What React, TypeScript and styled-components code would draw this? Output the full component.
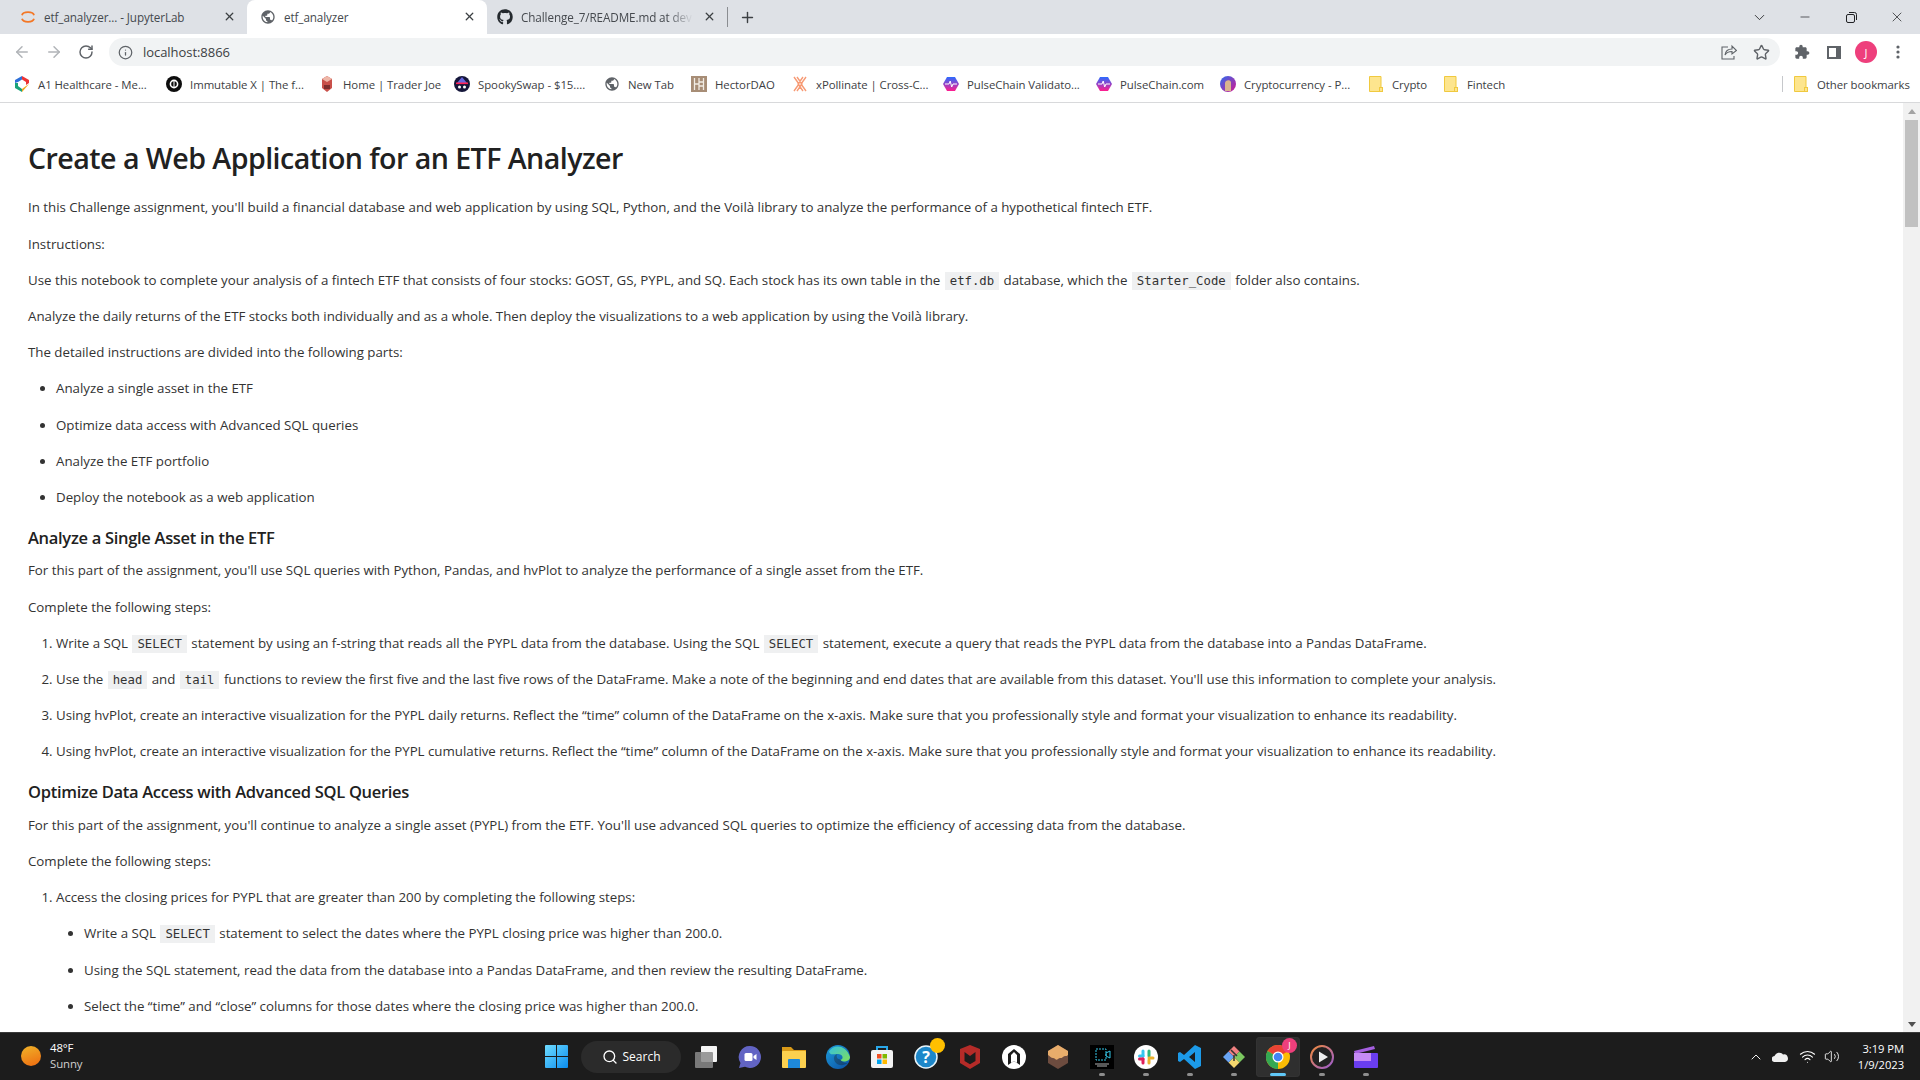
import React from "react";
import styled, { createGlobalStyle } from "styled-components";
import { ArrowLeft, ArrowRight, RotateCw, Info, Star, ChevronDown, ChevronUp, Minus, X, Plus, Search as SearchIcon, Wifi, Volume2 } from "lucide-react";
import { FaGithub } from "react-icons/fa";

const Global = createGlobalStyle`
  html, body { margin: 0; padding: 0; height: 100%; overflow: hidden; background: #fff; }
  * { box-sizing: border-box; }
`;
const UI = `"Open Sans", "Noto Sans", sans-serif`;

const Shell = styled.div`
  width: 1920px; height: 1080px; display: flex; flex-direction: column; overflow: hidden; font-family: ${UI};
`;
const TabStrip = styled.div`
  height: 34px; flex: none; background: #dee1e6; display: flex; align-items: stretch; padding-left: 7px; position: relative;
`;
const Tab = styled.div<{ $active?: boolean; $pad?: number }>`
  width: 240px; height: 34px; display: flex; align-items: center; padding: 0 10px 1px ${p => p.$pad ?? 13}px; gap: 8px;
  background: ${p => (p.$active ? "#fff" : "transparent")};
  border-radius: ${p => (p.$active ? "8px 8px 0 0" : "0")};
  color: #45494e; font-size: 11.7px; line-height: 16px;
`;
const TabIcon = styled.span`
  width: 16px; height: 16px; flex: none; display: flex; align-items: center; justify-content: center; color: #3c4043;
`;
const TabTitle = styled.span<{ $fade?: boolean }>`
  flex: 1; white-space: nowrap; overflow: hidden; letter-spacing: -0.1px;
  ${p => p.$fade ? "mask-image: linear-gradient(to right, #000 85%, transparent 100%);" : ""}
`;
const TabClose = styled.span`
  width: 16px; height: 16px; flex: none; display: flex; align-items: center; justify-content: center; color: #3c4043;
`;
const TabDivider = styled.div`
  width: 1px; height: 20px; background: #8a8d91; align-self: center;
`;
const NewTab = styled.div`
  width: 28px; margin-left: 5px; display: flex; align-items: center; justify-content: center; color: #3c4043;
`;
const WindowControls = styled.div`
  margin-left: auto; display: flex; align-items: center; color: #202124;
`;
const WindowButton = styled.div`
  width: 46px; height: 28px; display: flex; align-items: center; justify-content: center;
`;
const Toolbar = styled.div`
  height: 34px; flex: none; background: #fff; display: flex; align-items: center; padding: 2px 0 0 6px;
`;
const NavButton = styled.div<{ $muted?: boolean }>`
  width: 32px; height: 28px; display: flex; align-items: center; justify-content: center;
  color: ${p => (p.$muted ? "#b1b4b8" : "#5f6368")};
`;
const Omnibox = styled.div`
  margin-left: 7px; width: 1671px; height: 28px; border-radius: 14px 14px; background: #f1f3f4; display: flex; align-items: center;
  padding: 0 10px 0 9px; color: #5f6368;
`;
const Url = styled.span`
  margin-left: 10px; font-size: 13px; color: #3c4043; letter-spacing: -0.05px;
`;
const OmniActions = styled.div`
  margin-left: auto; display: flex; align-items: center; gap: 16px;
`;
const ToolActions = styled.div`
  margin-left: 6px; display: flex; align-items: center;
`;
const ToolAction = styled.div`
  width: 32px; height: 28px; display: flex; align-items: center; justify-content: center; color: #5f6368;
`;
const Avatar = styled.div`
  width: 22px; height: 22px; border-radius: 50%; background: #ee3f7c; color: #fff; font-size: 11px;
  display: flex; align-items: center; justify-content: center;
`;
const BookmarkBar = styled.div`
  height: 35px; flex: none; background: #fff; border-bottom: 1px solid #d8d9db; display: flex; align-items: center; padding: 0 0 2px 14px;
`;
const Bookmark = styled.div<{ $w: number }>`
  width: ${p => p.$w}px; flex: none; display: flex; align-items: center; gap: 8px; color: #3c4043; font-size: 11.4px; white-space: nowrap; letter-spacing: -0.05px;
`;
const BookmarkIcon = styled.span`
  width: 16px; height: 16px; flex: none; display: flex; align-items: center; justify-content: center;
`;
const BarDivider = styled.div`
  width: 1px; height: 16px; background: #c6c8cb; margin: 0 10px 0 0;
`;
const Middle = styled.div`
  flex: 1; min-height: 0; display: flex; background: #fff;
`;
const Page = styled.main`
  flex: 1; min-width: 0; overflow: hidden; padding: 22px 28px 0; color: #333; font-size: 13.32px; line-height: 21px; letter-spacing: -0.02px;
`;
const Title = styled.h1`
  margin: 16px 0 22.4px; font-size: 28.6px; line-height: 34px; font-weight: 600; color: #212121; letter-spacing: -0.55px;
`;
const SubTitle = styled.h3`
  margin: 17px 0 9.5px; font-size: 16.5px; line-height: 26px; font-weight: 600; color: #212121; letter-spacing: -0.3px;
`;
const Para = styled.p`
  margin: 0 0 15.2px; white-space: nowrap;
`;
const Code = styled.code`
  font-family: "DejaVu Sans Mono", monospace; font-size: 12.3px; line-height: 1; background: #eff0f1; color: #333; padding: 2px 5px; letter-spacing: 0; margin: 0 1px;
`;
const Bullets = styled.ul`
  margin: 0; padding: 0 0 0 28px; list-style: disc;
`;
const Numbers = styled.ol`
  margin: 0; padding: 0 0 0 28px;
`;
const Item = styled.li`
  & > ul { margin-top: 0; }
`;
const Scrollbar = styled.div`
  width: 17px; flex: none; background: #f1f1f1; display: flex; flex-direction: column; align-items: center; padding: 6px 0 5px;
`;
const ScrollArrow = styled.div<{ $up?: boolean }>`
  width: 0; height: 0; border-left: 4px solid transparent; border-right: 4px solid transparent;
  ${p => p.$up ? "border-bottom: 5px solid #a3a3a3;" : "margin-top: auto; border-top: 5px solid #505050;"}
`;
const ScrollThumb = styled.div`
  width: 13px; height: 107px; background: #c1c1c1; margin-top: 6px;
`;
const Taskbar = styled.footer`
  height: 48px; flex: none; background: #1c1c1c; border-top: 1px solid #3a3a3a; display: flex; align-items: center; color: #fff; position: relative;
`;
const Weather = styled.div`
  width: 534px; flex: none; display: flex; align-items: center; padding: 0 0 2px 21px; gap: 9px;
`;
const Sun = styled.div`
  width: 20px; height: 20px; border-radius: 50%; background: linear-gradient(160deg, #f0b429, #ee6a10);
`;
const WeatherText = styled.div`
  font-size: 11.4px; line-height: 16px; letter-spacing: -0.1px;
`;
const Muted = styled.div`
  color: #cfcfcf;
`;
const Dock = styled.div`
  display: flex; align-items: center; height: 40px;
`;
const StartButton = styled.div`
  width: 47px; padding-right: 3px; display: flex; align-items: center; justify-content: center;
`;
const SearchPill = styled.div`
  width: 100px; height: 32px; margin-right: 3px; border-radius: 16px; background: #2b2b2b; display: flex; align-items: center; justify-content: center; gap: 5px; font-size: 12px;
`;
const DockItem = styled.div<{ $active?: boolean }>`
  width: 44px; height: 40px; position: relative; display: flex; align-items: center; justify-content: center;
  ${p => p.$active ? "background: #2f2f2f; border-radius: 4px; box-shadow: inset 0 0 0 1px #333;" : ""}
`;
const RunDot = styled.span<{ $active?: boolean }>`
  position: absolute; bottom: 1px; left: 50%; transform: translateX(-50%); height: 3px; border-radius: 2px;
  width: ${p => (p.$active ? 16 : 6)}px; background: ${p => (p.$active ? "#60c8f8" : "#8e8e8e")};
`;
const IconBadge = styled.span<{ $c: string }>`
  position: absolute; top: 1px; right: 3px; width: 15px; height: 15px; border-radius: 50%; background: ${p => p.$c};
  font-size: 9px; color: #fff; display: flex; align-items: center; justify-content: center;
`;
const Tray = styled.div`
  margin-left: auto; display: flex; align-items: center; padding-right: 16px;
`;
const TrayIcon = styled.span<{ $w: number }>`
  width: ${p => p.$w}px; display: flex; align-items: center; justify-content: center; color: #fff;
`;
const Clock = styled.div`
  margin-left: 18px; text-align: right; font-size: 11.2px; line-height: 16px; letter-spacing: -0.05px;
`;

const GLOBE = "M12 2C6.48 2 2 6.48 2 12s4.48 10 10 10 10-4.48 10-10S17.52 2 12 2zm-1 17.93c-3.95-.49-7-3.85-7-7.93 0-.62.08-1.21.21-1.79L9 15v1c0 1.1.9 2 2 2v1.93zm6.9-2.54c-.26-.81-1-1.39-1.9-1.39h-1v-3c0-.55-.45-1-1-1H8v-2h2c.55 0 1-.45 1-1V7h2c1.1 0 2-.9 2-2v-.41c2.93 1.19 5 4.06 5 7.41 0 2.08-.8 3.97-2.1 5.39z";
const Globe = ({ s = 16 }: { s?: number }) => <svg width={s} height={s} viewBox="0 0 24 24" fill="#5f6368"><path d={GLOBE} /></svg>;
const Jupyter = () => (
  <svg width="16" height="16" viewBox="0 0 16 16" fill="none" stroke="#f37726" strokeWidth="1.8">
    <path d="M2 6.2C3 2.2 13 2.2 14 6.2" /><path d="M2 9.8C3 13.8 13 13.8 14 9.8" />
  </svg>
);
const Folder = () => (
  <svg width="14" height="16" viewBox="0 0 14 16"><path d="M.5.5h11.5v15H.5z" fill="#fde58e" stroke="#f0c93f" /><rect x="10.5" y="11.5" width="3" height="4" fill="#fde58e" stroke="#f0c93f" /></svg>
);
const Pulse = () => (
  <svg width="16" height="16" viewBox="0 0 16 16">
    <defs><linearGradient id="pg" x1="0" y1="0" x2="0" y2="1"><stop offset="0" stopColor="#2a6bff" /><stop offset="1" stopColor="#ff1d8e" /></linearGradient></defs>
    <path d="M4 1h8l4 7-4 7H4L0 8z" fill="url(#pg)" /><path d="M2 8h4l1.2-3 1.5 6L10 8h4" fill="none" stroke="#fff" strokeWidth="1" />
  </svg>
);
const marks: Record<string, React.ReactNode> = {
  a1: <svg width="16" height="16" viewBox="0 0 16 16"><path d="M8 0l7 4v3l-3 2V6L8 3.5z" fill="#e33" /><path d="M8 0L1 4v3l3-1 4-2.5z" fill="#2d6fd8" /><path d="M1 7v5l7 4v-3L4 10V7z" fill="#19a27a" /><path d="M15 8l-7 8v-3l4-3z" fill="#f2a71b" /></svg>,
  imx: <svg width="16" height="16" viewBox="0 0 16 16"><circle cx="8" cy="8" r="8" fill="#0d0d0d" /><circle cx="8" cy="8" r="3.6" fill="none" stroke="#fff" strokeWidth="1.6" /><path d="M8 4v8" stroke="#fff" /></svg>,
  joe: <svg width="16" height="16" viewBox="0 0 16 16"><path d="M3 3l5-3 5 3v9l-5 4-5-4z" fill="#c9504a" /><path d="M3 3l5 3 5-3-5-3z" fill="#eeb7a8" /><path d="M5 9h6v4H5z" fill="#7e2f2f" /></svg>,
  spooky: <svg width="16" height="16" viewBox="0 0 16 16"><circle cx="8" cy="8" r="8" fill="#15163a" /><path d="M3 7l5-6 5 6z" fill="#6665dd" /><rect x="2" y="6.5" width="12" height="1.6" fill="#f25" /><circle cx="5.5" cy="11" r="1.5" fill="#fff" /><circle cx="10.5" cy="11" r="1.5" fill="#fff" /></svg>,
  hector: <svg width="16" height="16" viewBox="0 0 16 16"><rect width="16" height="16" fill="#a78d76" /><path d="M3.5 2v12M8 2v12M12.5 2v12M3.5 8h5M8 6h4.5M8 10h4.5" stroke="#f2ece4" strokeWidth="1.3" /></svg>,
  xp: <svg width="16" height="16" viewBox="0 0 16 16" fill="none" stroke="#f79a74" strokeWidth="1.4"><path d="M2 1l5 7-5 7M14 1L9 8l5 7M5 1l5 7-5 7M11 1L6 8l5 7" /></svg>,
  crypto: <svg width="16" height="16" viewBox="0 0 16 16"><defs><linearGradient id="cg" x1="0" y1="0" x2="1" y2="1"><stop offset="0" stopColor="#2b6cf0" /><stop offset="1" stopColor="#d6178f" /></linearGradient></defs><circle cx="8" cy="8" r="8" fill="url(#cg)" /><path d="M5 15V7c0-3 5-4 6-1v9z" fill="#d9b48f" /></svg>,
};
const books: [React.ReactNode, string, number][] = [
  [marks.a1, "A1 Healthcare - Me...", 152], [marks.imx, "Immutable X | The f...", 153], [marks.joe, "Home | Trader Joe", 135],
  [marks.spooky, "SpookySwap - $15....", 150], [<Globe />, "New Tab", 87], [marks.hector, "HectorDAO", 101], [marks.xp, "xPollinate | Cross-C...", 151],
  [<Pulse />, "PulseChain Validato...", 153], [<Pulse />, "PulseChain.com", 124], [marks.crypto, "Cryptocurrency - P...", 148], [<Folder />, "Crypto", 75], [<Folder />, "Fintech", 339],
];

const Win = () => (
  <svg width="23" height="23" viewBox="0 0 23 23">
    <defs><linearGradient id="wg" x1="0" y1="0" x2="1" y2="1"><stop offset="0" stopColor="#6fdcff" /><stop offset="1" stopColor="#0a8df0" /></linearGradient></defs>
    <path d="M0 1a1 1 0 0 1 1-1h10v11H0zM12 0h10a1 1 0 0 1 1 1v10H12zM0 12h11v11H1a1 1 0 0 1-1-1zM12 12h11v10a1 1 0 0 1-1 1H12z" fill="url(#wg)" />
  </svg>
);
const dock: { k: string; run?: boolean; active?: boolean; badge?: [string, string]; icon: React.ReactNode }[] = [
  { k: "tv", icon: <svg width="24" height="24" viewBox="0 0 24 24"><rect x="7" y="1" width="16" height="16" rx="1" fill="#f4f4f4" /><rect x="1" y="7" width="18" height="16" rx="1" fill="#8a8a8a" fillOpacity=".85" /></svg> },
  { k: "teams", icon: <svg width="24" height="24" viewBox="0 0 24 24"><path d="M12 1a11 11 0 1 1-5 20.8L1 23l1.5-5A11 11 0 0 1 12 1z" fill="#6264c4" /><rect x="6.5" y="8" width="8" height="8" rx="1.5" fill="#fff" /><path d="M15.5 11l3-2v6l-3-2z" fill="#fff" /></svg> },
  { k: "files", icon: <svg width="24" height="24" viewBox="0 0 24 24"><path d="M0 2h9l3 3h12v2H0z" fill="#d99a18" /><rect y="6" width="24" height="17" rx="1" fill="#fcd04f" /><path d="M7 14h10a1 1 0 0 1 1 1v8H6v-8a1 1 0 0 1 1-1z" fill="#1e88d8" /></svg> },
  { k: "edge", icon: <svg width="24" height="24" viewBox="0 0 24 24"><defs><linearGradient id="eg" x1="0" y1="0" x2="1" y2="1"><stop offset="0" stopColor="#1d9bd8" /><stop offset="1" stopColor="#0b4fa5" /></linearGradient><linearGradient id="eg2" x1="0" y1="0" x2="1" y2="1"><stop offset="0" stopColor="#35c1e0" /><stop offset="1" stopColor="#7fe05a" /></linearGradient></defs><circle cx="12" cy="12" r="12" fill="url(#eg)" /><path d="M3 6.500C7 -1 20 -1 24 12c0 3-3 4.500-6 4.500-2 0-3.500-1-3.500-2 3 0 3-5-2-5.500-5-.5-8 2-9.500-2.500z" fill="url(#eg2)" /><path d="M14.500 14.500c-3 0-5-3-3-5.500-4 .5-5 6 -1 9.500 3 2.500 8 2 11-.5-3 .5-6-1-7-3.500z" fill="#1c1c1c" fillOpacity=".35" /></svg> },
  { k: "store", icon: <svg width="24" height="24" viewBox="0 0 24 24"><path d="M7 6V2h10v4" fill="none" stroke="#29a7e8" strokeWidth="2" /><rect x="1" y="5" width="22" height="18" rx="2" fill="#f3f3f3" /><rect x="7" y="9" width="4.500" height="4.500" fill="#f25022" /><rect x="12.500" y="9" width="4.500" height="4.500" fill="#7fba00" /><rect x="7" y="14.500" width="4.500" height="4.500" fill="#00a4ef" /><rect x="12.500" y="14.500" width="4.500" height="4.500" fill="#ffb900" /></svg> },
  { k: "help", badge: ["#ffc000", ""], icon: <svg width="24" height="24" viewBox="0 0 24 24"><circle cx="12" cy="12" r="11" fill="#1d87c9" stroke="#e8f4fa" strokeWidth="1.500" /><text x="12" y="18" textAnchor="middle" fontSize="16" fontWeight="700" fontFamily="Open Sans" fill="#fff">?</text></svg> },
  { k: "mcafee", icon: <svg width="24" height="24" viewBox="0 0 24 24"><path d="M2 4l10-4 10 4v14l-10 6-10-6zM6.500 7v9l5.500 3.300L17.500 16V7L12 11z" fill="#b52b28" fillRule="evenodd" /></svg> },
  { k: "arch", icon: <svg width="24" height="24" viewBox="0 0 24 24"><circle cx="12" cy="12" r="12" fill="#fff" /><path d="M6 20V9l6-5 6 5v11l-6-4z" fill="#1c1c1c" /><path d="M9 18V10l3-3 3 3v8l-3-2z" fill="#fff" /></svg> },
  { k: "box", icon: <svg width="24" height="24" viewBox="0 0 24 24"><path d="M12 0l10 6v12l-10 6-10-6V6z" fill="#6d4c3f" /><path d="M12 0l10 6v4c-2 2-3 0-5 2s-3 0-5 2-3-1-5-1-3-2-5-3V6z" fill="#e8ad6b" /></svg> },
  { k: "rec", run: true, icon: <svg width="24" height="24" viewBox="0 0 24 24"><rect width="24" height="24" fill="#000" /><path d="M6 4h10v11H6z" fill="none" stroke="#35c7e8" strokeWidth="1" strokeDasharray="2 1" /><path d="M16 8l4-2v7l-4-2z" fill="none" stroke="#35c7e8" /><path d="M5 19h14M7 21h10" stroke="#ddd" strokeWidth=".8" /></svg> },
  { k: "slack", run: true, icon: <svg width="24" height="24" viewBox="0 0 24 24" strokeWidth="3" strokeLinecap="round"><circle cx="12" cy="12" r="12" fill="#fff" /><path d="M9 6v5M6 9" stroke="#36c5f0" /><path d="M5.500 11h3.500" stroke="#36c5f0" /><path d="M15 6v5" stroke="#2eb67d" /><path d="M15 13h4" stroke="#ecb22e" /><path d="M15 15v3" stroke="#ecb22e" /><path d="M9 14v4" stroke="#e01e5a" /><path d="M5.500 14H9" stroke="#e01e5a" /></svg> },
  { k: "vsc", run: true, icon: <svg width="24" height="24" viewBox="0 0 24 24"><path d="M17 0l6 3v18l-6 3L6 14l-4 3-2-1V8l2-1 4 3zM17 7l-6 5 6 5z" fill="#1c9ae8" fillRule="evenodd" /></svg> },
  { k: "git", run: true, icon: <svg width="24" height="24" viewBox="0 0 24 24"><path d="M12 12L6.500 6.500 12 1l5.500 5.500z" fill="#f08080" /><path d="M12 12l5.500-5.500L23 12l-5.500 5.500z" fill="#7cc860" /><path d="M12 12l5.500 5.500L12 23l-5.500-5.500z" fill="#f5d76e" /><path d="M12 12l-5.500 5.500L1 12l5.500-5.500z" fill="#6aa5f5" /><path d="M9 5l6 6M12 10v6" stroke="#333" strokeWidth="1.500" /></svg> },
  { k: "chrome", run: true, active: true, badge: ["#ee3f7c", "J"], icon: <svg width="24" height="24" viewBox="0 0 24 24"><circle cx="12" cy="12" r="12" fill="#fbbc04" /><path d="M12 12L1.600 6A12 12 0 0 1 22.400 6z" fill="#ea4335" /><path d="M12 12L1.600 6A12 12 0 0 0 12 24z" fill="#34a853" /><circle cx="12" cy="12" r="5.500" fill="#fff" /><circle cx="12" cy="12" r="4.300" fill="#4285f4" /></svg> },
  { k: "play", run: true, icon: <svg width="24" height="24" viewBox="0 0 24 24"><defs><linearGradient id="pl" x1="0" y1="0" x2="1" y2="1"><stop offset="0" stopColor="#f08a3c" /><stop offset="1" stopColor="#9a5bd0" /></linearGradient></defs><circle cx="12" cy="12" r="11" fill="#222" stroke="url(#pl)" strokeWidth="2" /><path d="M9 6.500l9 5.500-9 5.500z" fill="#eee" /></svg> },
  { k: "clap", run: true, icon: <svg width="24" height="24" viewBox="0 0 24 24"><path d="M0 6l20-5 1 3L1 9z" fill="#a55fe0" /><rect y="8" width="24" height="15" rx="1" fill="#6a3df0" /><rect y="8" width="17" height="8" fill="#c58af5" /></svg> },
];

export default function App() {
  return (
    <Shell>
      <Global />
      <TabStrip>
        <Tab><TabIcon><Jupyter /></TabIcon><TabTitle>etf_analyzer... - JupyterLab</TabTitle><TabClose><X size={13} strokeWidth={2.4} /></TabClose></Tab>
        <Tab $active><TabIcon><Globe /></TabIcon><TabTitle>etf_analyzer</TabTitle><TabClose><X size={13} strokeWidth={2.4} /></TabClose></Tab>
        <Tab $pad={10}><TabIcon><FaGithub size={16} color="#24292e" /></TabIcon><TabTitle $fade>Challenge_7/README.md at dev</TabTitle><TabClose><X size={13} strokeWidth={2.4} /></TabClose></Tab>
        <TabDivider />
        <NewTab><Plus size={17} strokeWidth={2} /></NewTab>
        <WindowControls>
          <WindowButton><ChevronDown size={17} strokeWidth={1.2} /></WindowButton>
          <WindowButton><Minus size={14} strokeWidth={1.2} /></WindowButton>
          <WindowButton><svg width="11" height="11" viewBox="0 0 11 11" fill="none" stroke="#202124"><rect x=".5" y="2.500" width="8" height="8" rx="1.500" /><path d="M3 .5h5.500a2 2 0 0 1 2 2V8" /></svg></WindowButton>
          <WindowButton><X size={16} strokeWidth={1.1} /></WindowButton>
        </WindowControls>
      </TabStrip>
      <Toolbar>
        <NavButton $muted><ArrowLeft size={18} strokeWidth={2} /></NavButton>
        <NavButton $muted><ArrowRight size={18} strokeWidth={2} /></NavButton>
        <NavButton><RotateCw size={16} strokeWidth={2.2} /></NavButton>
        <Omnibox>
          <Info size={15} strokeWidth={2} />
          <Url>localhost:8866</Url>
          <OmniActions>
            <svg width="16" height="16" viewBox="0 0 16 16" fill="none" stroke="#5f6368" strokeWidth="1.100"><path d="M7 3H1v12h12v-3" /><path d="M4 11c.5-4 3.500-6 7-6V2l4.500 4.500L11 10V7.500C8 7.500 5.500 8.500 4 11z" /></svg>
            <Star size={17} strokeWidth={2} />
          </OmniActions>
        </Omnibox>
        <ToolActions>
          <ToolAction><svg width="16" height="16" viewBox="0 0 24 24" fill="#5f6368"><path d="M20.5 11H19V7c0-1.100-.9-2-2-2h-4V3.500C13 2.120 11.880 1 10.500 1S8 2.120 8 3.500V5H4c-1.100 0-1.990.9-1.990 2v3.800H3.500c1.490 0 2.700 1.210 2.700 2.700s-1.210 2.700-2.700 2.700H2V20c0 1.100.9 2 2 2h3.800v-1.500c0-1.490 1.210-2.700 2.700-2.700 1.490 0 2.700 1.210 2.700 2.700V22H17c1.100 0 2-.9 2-2v-4h1.500c1.380 0 2.500-1.120 2.500-2.500S21.880 11 20.500 11z" /></svg></ToolAction>
          <ToolAction><svg width="14" height="13" viewBox="0 0 14 13"><path d="M0 0h14v13H0zM2 2v9h7V2z" fill="#5f6368" fillRule="evenodd" /></svg></ToolAction>
          <ToolAction><Avatar>J</Avatar></ToolAction>
          <ToolAction><svg width="4" height="14" viewBox="0 0 4 14" fill="#5f6368"><circle cx="2" cy="2" r="1.600" /><circle cx="2" cy="7" r="1.600" /><circle cx="2" cy="12" r="1.600" /></svg></ToolAction>
        </ToolActions>
      </Toolbar>
      <BookmarkBar>
        {books.map(([ic, label, w]) => (
          <Bookmark key={label} $w={w}><BookmarkIcon>{ic}</BookmarkIcon>{label}</Bookmark>
        ))}
        <BarDivider />
        <Bookmark $w={125}><BookmarkIcon><Folder /></BookmarkIcon>Other bookmarks</Bookmark>
      </BookmarkBar>
      <Middle>
        <Page>
          <Title>Create a Web Application for an ETF Analyzer</Title>
          <Para>In this Challenge assignment, you'll build a financial database and web application by using SQL, Python, and the Voilà library to analyze the performance of a hypothetical fintech ETF.</Para>
          <Para>Instructions:</Para>
          <Para>Use this notebook to complete your analysis of a fintech ETF that consists of four stocks: GOST, GS, PYPL, and SQ. Each stock has its own table in the <Code>etf.db</Code> database, which the <Code>Starter_Code</Code> folder also contains.</Para>
          <Para>Analyze the daily returns of the ETF stocks both individually and as a whole. Then deploy the visualizations to a web application by using the Voilà library.</Para>
          <Para>The detailed instructions are divided into the following parts:</Para>
          <Bullets>
            <Item><Para>Analyze a single asset in the ETF</Para></Item>
            <Item><Para>Optimize data access with Advanced SQL queries</Para></Item>
            <Item><Para>Analyze the ETF portfolio</Para></Item>
            <Item><Para>Deploy the notebook as a web application</Para></Item>
          </Bullets>
          <SubTitle>Analyze a Single Asset in the ETF</SubTitle>
          <Para>For this part of the assignment, you'll use SQL queries with Python, Pandas, and hvPlot to analyze the performance of a single asset from the ETF.</Para>
          <Para>Complete the following steps:</Para>
          <Numbers>
            <Item><Para>Write a SQL <Code>SELECT</Code> statement by using an f-string that reads all the PYPL data from the database. Using the SQL <Code>SELECT</Code> statement, execute a query that reads the PYPL data from the database into a Pandas DataFrame.</Para></Item>
            <Item><Para>Use the <Code>head</Code> and <Code>tail</Code> functions to review the first five and the last five rows of the DataFrame. Make a note of the beginning and end dates that are available from this dataset. You'll use this information to complete your analysis.</Para></Item>
            <Item><Para>Using hvPlot, create an interactive visualization for the PYPL daily returns. Reflect the “time” column of the DataFrame on the x-axis. Make sure that you professionally style and format your visualization to enhance its readability.</Para></Item>
            <Item><Para>Using hvPlot, create an interactive visualization for the PYPL cumulative returns. Reflect the “time” column of the DataFrame on the x-axis. Make sure that you professionally style and format your visualization to enhance its readability.</Para></Item>
          </Numbers>
          <SubTitle>Optimize Data Access with Advanced SQL Queries</SubTitle>
          <Para>For this part of the assignment, you'll continue to analyze a single asset (PYPL) from the ETF. You'll use advanced SQL queries to optimize the efficiency of accessing data from the database.</Para>
          <Para>Complete the following steps:</Para>
          <Numbers>
            <Item>
              <Para>Access the closing prices for PYPL that are greater than 200 by completing the following steps:</Para>
              <Bullets>
                <Item><Para>Write a SQL <Code>SELECT</Code> statement to select the dates where the PYPL closing price was higher than 200.0.</Para></Item>
                <Item><Para>Using the SQL statement, read the data from the database into a Pandas DataFrame, and then review the resulting DataFrame.</Para></Item>
                <Item><Para>Select the “time” and “close” columns for those dates where the closing price was higher than 200.0.</Para></Item>
              </Bullets>
            </Item>
          </Numbers>
        </Page>
        <Scrollbar><ScrollArrow $up /><ScrollThumb /><ScrollArrow /></Scrollbar>
      </Middle>
      <Taskbar>
        <Weather><Sun /><WeatherText>48°F<Muted>Sunny</Muted></WeatherText></Weather>
        <Dock>
          <StartButton><Win /></StartButton>
          <SearchPill><SearchIcon size={16} strokeWidth={2} />Search</SearchPill>
          {dock.map(d => (
            <DockItem key={d.k} $active={d.active}>
              {d.icon}
              {d.badge && <IconBadge $c={d.badge[0]}>{d.badge[1]}</IconBadge>}
              {d.run && <RunDot $active={d.active} />}
            </DockItem>
          ))}
        </Dock>
        <Tray>
          <TrayIcon $w={24}><ChevronUp size={16} strokeWidth={1.4} /></TrayIcon>
          <TrayIcon $w={24}><svg width="16" height="10" viewBox="0 0 16 10"><path d="M3 10a3 3 0 0 1-.5-6A5 5 0 0 1 11 2.500 3.800 3.800 0 0 1 13 10z" fill="#f0f0f0" /></svg></TrayIcon>
          <TrayIcon $w={32}><Wifi size={17} strokeWidth={1.5} /></TrayIcon>
          <TrayIcon $w={16}><Volume2 size={17} strokeWidth={1.3} /></TrayIcon>
          <Clock>3:19 PM<div>1/9/2023</div></Clock>
        </Tray>
      </Taskbar>
    </Shell>
  );
}
